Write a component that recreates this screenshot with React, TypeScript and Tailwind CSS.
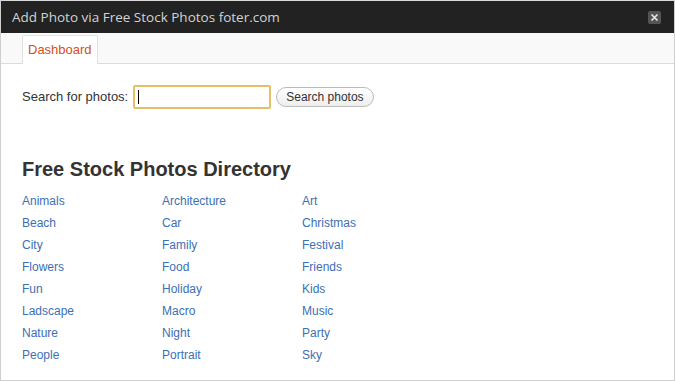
import React from "react";

const cols = [
  ["Animals", "Beach", "City", "Flowers", "Fun", "Ladscape", "Nature", "People"],
  ["Architecture", "Car", "Family", "Food", "Holiday", "Macro", "Night", "Portrait"],
  ["Art", "Christmas", "Festival", "Friends", "Kids", "Music", "Party", "Sky"],
];

export default function App() {
  return (
    <div
      className="w-[675px] h-[381px] bg-white border border-t-[#d8d8d8] border-[#cfcfcf] flex flex-col overflow-hidden"
      style={{ fontFamily: '"Liberation Sans", Arial, sans-serif' }}
    >
      <div className="h-[32px] bg-[#222222] flex items-center justify-between pl-[11px] pr-[13px] shrink-0">
        <span className="text-[13.5px] text-[#d2d2d2]" style={{ fontFamily: '"Open Sans", sans-serif' }}>
          Add Photo via Free Stock Photos foter.com
        </span>
        <span className="w-[13px] h-[13px] bg-[#555555] rounded-[2px] flex items-center justify-center">
          <svg width="9" height="9" viewBox="0 0 9 9">
            <path d="M1.5 1.5L7.5 7.5M7.5 1.5L1.5 7.5" stroke="#e8e8e8" strokeWidth="1.6" />
          </svg>
        </span>
      </div>
      <div className="h-[31px] bg-[#f9f9f9] border-b border-[#dcdcdc] flex items-end pl-[21px] shrink-0">
        <div className="h-[29px] bg-white border border-b-0 border-[#e2e2e2] px-[5px] flex items-center -mb-px rounded-t-[2px]">
          <span className="text-[13px] text-[#d54e21]">Dashboard</span>
        </div>
      </div>
      <div className="pl-[21px] pt-[21px]">
        <div className="flex items-center h-[24px]">
          <span className="text-[13px] text-[#333333]">Search for photos:</span>
          <div className="ml-[5px] w-[138px] h-[24px] border-2 border-[#e4c069] rounded-[2px] flex items-center pl-[3px] bg-white">
            <span className="w-px h-[14px] bg-black" />
          </div>
          <button className="ml-[5px] h-[20px] px-[9px] rounded-full border border-[#bbbbbb] bg-gradient-to-b from-[#ffffff] to-[#eeeeee] text-[12px] text-[#333333] leading-none">
            Search photos
          </button>
        </div>
        <h2 className="mt-[48px] text-[20px] font-bold text-[#333333] leading-[24px]">
          Free Stock Photos Directory
        </h2>
        <div className="mt-[9px] flex">
          {cols.map((c, i) => (
            <div key={i} className="w-[140px] flex flex-col">
              {c.map((t) => (
                <a key={t} className="text-[12px] text-[#3d6fb4] leading-[22px] h-[22px]">
                  {t}
                </a>
              ))}
            </div>
          ))}
        </div>
      </div>
    </div>
  );
}
